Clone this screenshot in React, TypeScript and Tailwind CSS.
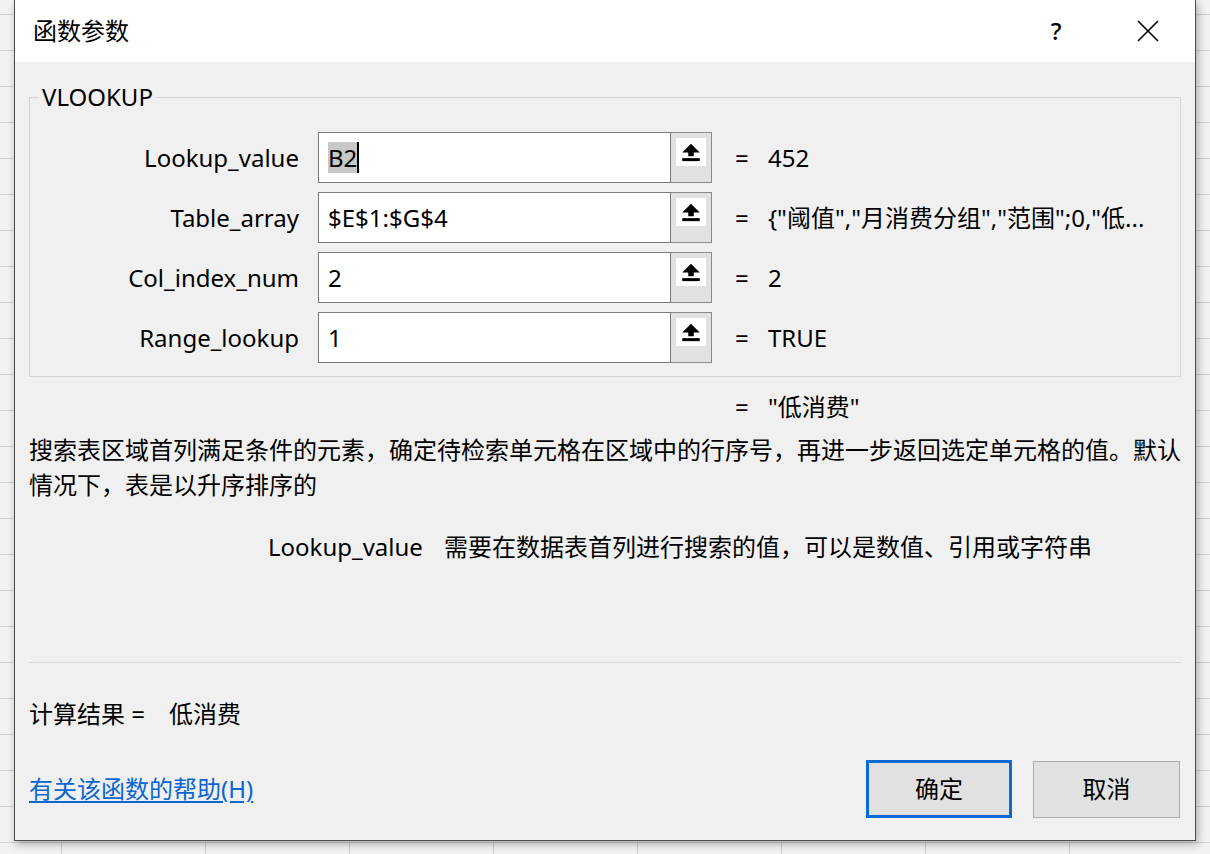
import React from "react";

const FONT = { fontFamily: '"Noto Sans", "Noto Sans CJK SC", sans-serif' };

type Arg = { name: string; value: string; result: string; selected?: boolean };

const args: Arg[] = [
  { name: "Lookup_value", value: "B2", result: "452", selected: true },
  { name: "Table_array", value: "$E$1:$G$4", result: '{"阈值","月消费分组","范围";0,"低...' },
  { name: "Col_index_num", value: "2", result: "2" },
  { name: "Range_lookup", value: "1", result: "TRUE" },
];

function CollapseIcon() {
  return (
    <svg className="h-[19px] w-[20px] shrink-0" viewBox="0 0 16 15" aria-hidden>
      <polygon points="8,0.5 15,7.5 10.2,7.5 10.2,10.5 5.8,10.5 5.8,7.5 1,7.5" fill="#000" />
      <rect x="1" y="12" width="14" height="2.4" fill="#000" />
    </svg>
  );
}

function ArgRow({ arg }: { arg: Arg }) {
  return (
    <div className="flex h-[51px] items-center">
      <div className="w-[269px] text-right text-[24px] leading-none text-black">{arg.name}</div>
      <div className="ml-[19px] flex h-full w-[353px] items-center border border-[#7a7a7a] bg-white pl-[9px] text-[24px] text-black">
        {arg.selected ? (
          <span className="flex items-center">
            <span className="bg-[#c8c8c8] leading-[31px]">{arg.value}</span>
            <span className="h-[31px] w-[2px] bg-black" />
          </span>
        ) : (
          <span>{arg.value}</span>
        )}
      </div>
      <div className="flex h-full w-[41px] items-start justify-center border border-l-0 border-[#8a8a8a] bg-[#e1e1e1] pt-[5px]">
        <div className="flex h-[28px] w-[30px] items-center justify-center bg-white">
          <CollapseIcon />
        </div>
      </div>
      <div className="ml-[23px] w-[33px] text-[24px] text-black">=</div>
      <div className="whitespace-nowrap text-[24px] text-black">{arg.result}</div>
    </div>
  );
}

export default function App() {
  return (
    <div
      style={FONT}
      className="h-[854px] w-[1210px] overflow-hidden bg-[#f2f2f2] bg-[linear-gradient(#cfcfcf_1px,transparent_1px),linear-gradient(90deg,#cfcfcf_1px,transparent_1px)] bg-[size:144px_36px] bg-[position:61px_14px] pl-[14px]"
    >
      <div className="flex h-[841px] w-[1182px] flex-col border border-t-0 border-[#4d4d4d] bg-[#f0f0f0] shadow-[2px_3px_8px_rgba(0,0,0,0.3)]">
        <div className="flex h-[62px] items-center bg-white pl-[18px] text-black">
          <div className="flex-1 text-[24px]">函数参数</div>
          <div className="w-[30px] text-center text-[24px] font-medium">?</div>
          <div className="ml-[65px] mr-[35px] flex w-[24px] items-center justify-center">
            <svg width="24" height="24" viewBox="0 0 24 24" aria-hidden>
              <path d="M2 2 L22 22 M22 2 L2 22" stroke="#000" strokeWidth="1.6" fill="none" />
            </svg>
          </div>
        </div>

        <div className="flex flex-1 flex-col px-[14px]">
          <fieldset className="mt-[20px] border border-[#d5d5d5] pb-[13px] pt-[20px]">
            <legend className="ml-[9px] px-[3px] text-[24px] leading-[30px] text-black">VLOOKUP</legend>
            <div className="flex flex-col gap-[9px]">
              {args.map((a) => (
                <ArgRow key={a.name} arg={a} />
              ))}
            </div>
          </fieldset>

          <div className="mt-[15px] flex h-[30px] items-center text-[24px] text-black">
            <div className="ml-[706px] w-[33px]">=</div>
            <div>"低消费"</div>
          </div>

          <div className="mt-[10px] whitespace-nowrap text-[24px] leading-[35px] text-black">
            <div>搜索表区域首列满足条件的元素，确定待检索单元格在区域中的行序号，再进一步返回选定单元格的值。默认</div>
            <div>情况下，表是以升序排序的</div>
          </div>

          <div className="mt-[30px] flex h-[30px] items-center text-[24px] text-black">
            <div className="ml-[239px] w-[176px]">Lookup_value</div>
            <div>需要在数据表首列进行搜索的值，可以是数值、引用或字符串</div>
          </div>

          <div className="mt-[100px] h-px bg-[#d9d9d9]" />

          <div className="mt-[36px] flex h-[30px] items-center text-[24px] text-black">
            <span>计算结果 =</span>
            <span className="ml-[24px]">低消费</span>
          </div>

          <div className="mt-[31px] flex items-center">
            <a href="#" className="flex-1 text-[24px] text-[#0b66d0] underline underline-offset-[3px]">
              有关该函数的帮助(H)
            </a>
            <button className="flex h-[58px] w-[146px] items-center justify-center border-[3px] border-[#0a6ad6] bg-[#e1e1e1] text-[24px] text-black">
              确定
            </button>
            <button className="ml-[21px] mr-px flex h-[57px] w-[147px] items-center justify-center border border-[#adadad] bg-[#e1e1e1] text-[24px] text-black">
              取消
            </button>
          </div>
        </div>
      </div>
    </div>
  );
}
